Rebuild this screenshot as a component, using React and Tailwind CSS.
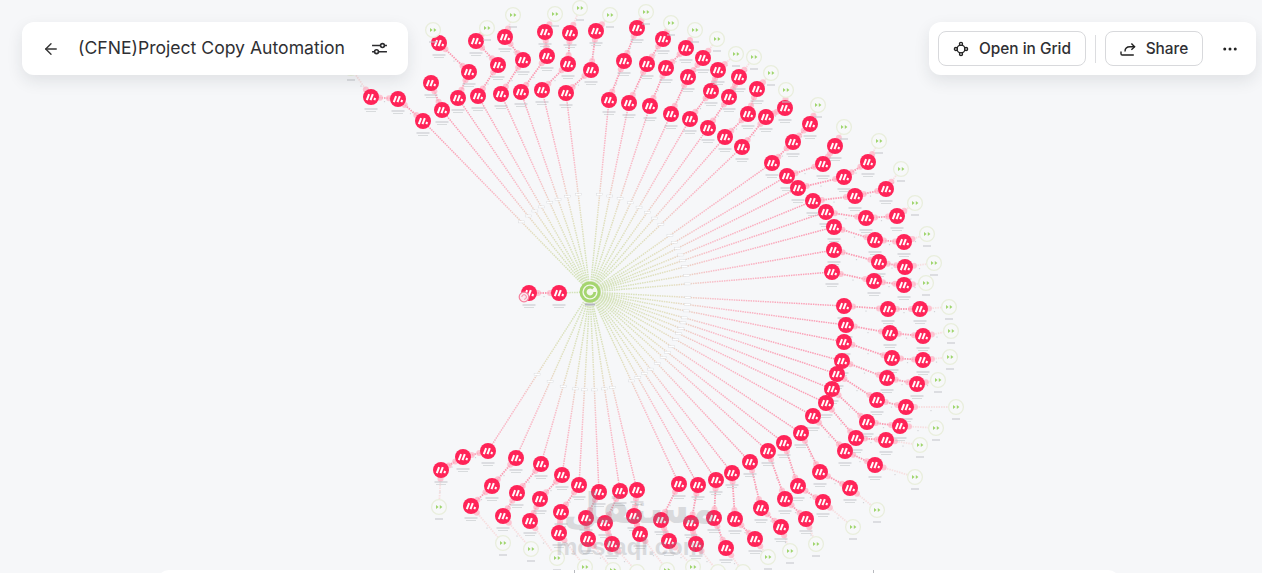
import { ArrowLeft, Ellipsis } from "lucide-react";

const HUB = [590, 292];

// each route runs from the hub outwards: modules first, then the grey ending
const routes = [
  { m: [[423, 121], [398, 99], [371, 97]], end: [351, 68] },
  { m: [[442, 110], [431, 83]] },
  { m: [[458, 98], [469, 72], [439, 43]], end: [433, 30] },
  { m: [[478, 96], [498, 65], [476, 41]], end: [487, 28] },
  { m: [[501, 94], [523, 60], [505, 37]], end: [513, 15] },
  { m: [[521, 92], [547, 56], [545, 32]], end: [555, 14] },
  { m: [[542, 90], [568, 64], [570, 33]], end: [580, 8] },
  { m: [[566, 93], [591, 70], [596, 31]], end: [610, 15] },
  { m: [[609, 100], [624, 61], [637, 28]], end: [646, 12] },
  { m: [[629, 103], [647, 64], [663, 39]], end: [671, 23] },
  { m: [[650, 106], [666, 68], [686, 48]], end: [695, 30] },
  { m: [[671, 114], [688, 77], [703, 58]], end: [717, 39] },
  { m: [[690, 119], [711, 91], [718, 70]], end: [736, 54] },
  { m: [[708, 128], [729, 97], [739, 77]], end: [754, 57] },
  { m: [[725, 137], [748, 114], [757, 89]], end: [771, 73] },
  { m: [[742, 147], [766, 117], [785, 108]], end: [786, 90] },
  { m: [[772, 163], [793, 142], [810, 124]], end: [818, 105] },
  { m: [[787, 176], [823, 164], [835, 146]], end: [844, 127] },
  { m: [[798, 188], [844, 177], [868, 162]], end: [879, 141] },
  { m: [[813, 201], [855, 196], [886, 189]], end: [901, 169] },
  { m: [[826, 212], [866, 218], [897, 216]], end: [915, 203] },
  { m: [[834, 227], [875, 240], [904, 242]], end: [927, 234] },
  { m: [[834, 250], [879, 262], [905, 267]], end: [934, 263] },
  { m: [[832, 272], [874, 281], [904, 285]], end: [926, 283] },
  { m: [[844, 306], [888, 309], [920, 309]], end: [949, 307] },
  { m: [[846, 325], [890, 333], [923, 336]], end: [951, 331] },
  { m: [[844, 342], [892, 358], [923, 360]], end: [950, 357] },
  { m: [[842, 361], [887, 378], [917, 384]], end: [938, 380] },
  { m: [[837, 374], [877, 400], [906, 407]], end: [956, 407] },
  { m: [[832, 389], [867, 422], [900, 426]], end: [936, 428] },
  { m: [[826, 403], [856, 438], [886, 440]], end: [920, 445] },
  { m: [[813, 416], [845, 451], [875, 465]], end: [915, 477] },
  { m: [[801, 433], [820, 472], [850, 488]], end: [877, 510] },
  { m: [[784, 443], [798, 486], [823, 502]], end: [853, 527] },
  { m: [[768, 451], [785, 499], [806, 519]], end: [816, 544] },
  { m: [[750, 462], [761, 508], [781, 527]], end: [790, 551] },
  { m: [[732, 473], [735, 519], [755, 539]], end: [768, 557] },
  { m: [[716, 480], [714, 518], [726, 548]], end: [743, 572] },
  { m: [[698, 485], [691, 523], [696, 544]], end: [718, 572] },
  { m: [[679, 484], [661, 520], [669, 541]], end: [693, 567] },
  { m: [[637, 490], [634, 516], [640, 534]], end: [667, 570] },
  { m: [[620, 491], [605, 523], [612, 544]], end: [637, 572] },
  { m: [[599, 492], [586, 518], [588, 539]], end: [613, 570] },
  { m: [[579, 485], [561, 512], [559, 533]], end: [585, 567] },
  { m: [[562, 475], [540, 499], [530, 521]], end: [557, 558] },
  { m: [[541, 464], [517, 493], [503, 516]], end: [531, 549] },
  { m: [[516, 458], [492, 486], [471, 506]], end: [503, 543] },
  { m: [[488, 451], [463, 457], [441, 470]], end: [439, 507] },
  { m: [[559, 293], [529, 293]] },
];

const towards = (a, b, dist) => {
  const dx = b[0] - a[0];
  const dy = b[1] - a[1];
  const len = Math.hypot(dx, dy) || 1;
  return [a[0] + (dx / len) * dist, a[1] + (dy / len) * dist];
};

const Link = ({ from, to, faint }) => {
  const mid = [(from[0] + to[0]) / 2, (from[1] + to[1]) / 2];
  return (
    <g>
      <line
        x1={from[0]}
        y1={from[1]}
        x2={to[0]}
        y2={to[1]}
        stroke={faint ? "#f7dfe0" : "#fb9bb2"}
        strokeWidth="1.8"
        strokeDasharray="1.5 1"
      />
      <rect x={mid[0] - 0.6} y={mid[1] + 3} width="1.2" height="1.2" fill="#d2d4d8" />
    </g>
  );
};

const Caption = ({ x, y, wide }) => (
  <g fill="#c2c4c9">
    <rect x={x - (wide ? 6.5 : 4)} y={y} width={wide ? 13 : 8} height="1" />
    {wide && <rect x={x - 5} y={y + 2.5} width="10" height="0.8" opacity="0.7" />}
  </g>
);

const Module = ({ at }) => (
  <g transform={`translate(${at[0]} ${at[1]})`}>
    <circle r="8" fill="#ff2458" />
    <g stroke="#fff" strokeWidth="2">
      <line x1="-4.2" y1="3.2" x2="-1.9" y2="-2.9" />
      <line x1="-0.5" y1="3.2" x2="1.8" y2="-2.9" />
      <line x1="3.3" y1="3.2" x2="4.2" y2="1" />
    </g>
  </g>
);

const Ending = ({ at }) => (
  <g transform={`translate(${at[0]} ${at[1]})`}>
    <circle r="7.4" fill="#f7f8f9" stroke="#e9eedd" strokeWidth="1.3" />
    <path d="M-3 -2v4l2.6 -2zM0.8 -2v4l2.6 -2z" fill="#9fd56d" />
  </g>
);

const Flow = () => {
  const modules = routes.flatMap((r) => r.m);
  const handles = routes.flatMap((r) => {
    const path = r.end ? [...r.m, r.end] : r.m;
    return path.slice(0, -1).flatMap((p, i) => [
      towards(p, path[i + 1], 9),
      ...(i + 1 < r.m.length ? [towards(path[i + 1], p, 9)] : []),
    ]);
  });

  return (
    <svg className="absolute inset-0" width="1262" height="573" viewBox="0 0 1262 573">
      <defs>
        <radialGradient id="spoke" gradientUnits="userSpaceOnUse" cx={HUB[0]} cy={HUB[1]} r="230">
          <stop offset="0" stopColor="#cfe3b5" />
          <stop offset="0.36" stopColor="#e3dfc0" />
          <stop offset="0.55" stopColor="#f9bcc8" />
          <stop offset="1" stopColor="#fb9fb6" />
        </radialGradient>
      </defs>

      {routes.map((r, i) => (
        <line
          key={`spoke-${i}`}
          x1={HUB[0]}
          y1={HUB[1]}
          x2={r.m[0][0]}
          y2={r.m[0][1]}
          stroke="url(#spoke)"
          strokeWidth="1.5"
          strokeDasharray="1.5 0.9"
        />
      ))}

      {/* small edge labels on the spokes */}
      {routes.slice(0, -1).map((r, i) => {
        const p = towards(HUB, r.m[0], 98);
        return <rect key={`tag-${i}`} x={p[0] - 3} y={p[1] - 1} width="6" height="2" fill="#fff" stroke="#d4d6da" strokeWidth="0.4" />;
      })}

      {routes.map((r, i) =>
        r.m.slice(0, -1).map((p, j) => <Link key={`l-${i}-${j}`} from={p} to={r.m[j + 1]} />),
      )}
      {routes.map(
        (r, i) => r.end && <Link key={`e-${i}`} from={r.m[r.m.length - 1]} to={r.end} faint />,
      )}

      {handles.map((p, i) => (
        <circle key={`h-${i}`} cx={p[0]} cy={p[1]} r="3" fill="#ffb0c3" opacity="0.7" />
      ))}

      {modules.map((p, i) => (
        <g key={`m-${i}`}>
          <Caption x={p[0]} y={p[1] + 11.5} wide />
          <Module at={p} />
        </g>
      ))}
      {routes.map(
        (r, i) =>
          r.end && (
            <g key={`end-${i}`}>
              <Caption x={r.end[0]} y={r.end[1] + 11.5} />
              <Ending at={r.end} />
            </g>
          ),
      )}

      {/* trigger on the first module */}
      <circle cx="524" cy="297" r="4.8" fill="#fbeaee" stroke="#f5809d" strokeWidth="1.2" />
      <path d="M521.8 297a2.3 2.3 0 1 1 2.3 2.3" fill="none" stroke="#f5809d" strokeWidth="0.9" />

      {/* hub */}
      <g transform={`translate(${HUB[0]} ${HUB[1]})`}>
        <circle r="10.5" fill="#a5d56f" />
        <circle r="7.6" fill="#f4f8ee" />
        <path d="M3.2 -3.6a4.8 4.8 0 1 0 1.6 3.6" fill="none" stroke="#a5d56f" strokeWidth="2.8" />
        <rect x="-5" y="11.5" width="10" height="2" fill="#b4b6bc" />
      </g>
    </svg>
  );
};

const TuneIcon = () => (
  <svg width="17" height="17" viewBox="0 0 16 16" fill="none" stroke="#2c2c2f" strokeWidth="1.5">
    <path d="M1 5.2h8M12.6 5.2H15M1 11h2.4M7 11h8" />
    <circle cx="10.8" cy="5.2" r="1.8" />
    <circle cx="5.2" cy="11" r="1.8" />
  </svg>
);

const GridIcon = () => (
  <svg width="16" height="16" viewBox="0 0 16 16" fill="none" stroke="#222" strokeWidth="1.4">
    <circle cx="8" cy="8" r="3.9" />
    <circle cx="8" cy="2.9" r="1.5" fill="#fff" />
    <circle cx="8" cy="13.1" r="1.5" fill="#fff" />
    <circle cx="2.9" cy="8" r="1.5" fill="#fff" />
    <circle cx="13.1" cy="8" r="1.5" fill="#fff" />
  </svg>
);

const ShareIcon = () => (
  <svg width="16" height="16" viewBox="0 0 16 16" fill="none" stroke="#222" strokeWidth="1.4">
    <path d="M1 10.5v2.2c0 .7.5 1.3 1.2 1.3h11.6" />
    <path d="M5 10.5c0-3 2-4.8 5-4.8h4.6" />
    <path d="M11.4 2.6l3.2 3.1-3.2 3.1" />
  </svg>
);

const App = () => {
  return (
    <div className="relative h-screen overflow-hidden bg-[#f6f7f9] font-['Inter',sans-serif] text-[#2f2f33]">
      <Flow />

      {/* watermark over the canvas */}
      <div className="pointer-events-none absolute left-[555px] top-[484px] flex w-[150px] flex-col items-center text-[#84868b] opacity-25">
        <span className="ml-[20px] font-['DejaVu_Sans',sans-serif] text-[42px] font-bold leading-[49px]">مستقل</span>
        <span className="font-['Liberation_Sans',sans-serif] text-[24px] font-bold leading-[28px]">mostaql.com</span>
      </div>

      <div className="absolute left-[22px] top-[22px] flex h-[53px] w-[386px] items-center rounded-xl bg-white px-[20px] shadow-[0_6px_16px_rgba(30,35,50,0.1)]">
        <ArrowLeft className="h-[18px] w-[18px] text-[#333]" strokeWidth={1.8} />
        <h1 className="ml-[18px] flex-1 text-[17.6px] font-normal whitespace-nowrap">(CFNE)Project Copy Automation</h1>
        <TuneIcon />
      </div>

      <div className="absolute left-[929px] top-[22px] flex h-[53px] w-[327px] items-center rounded-xl bg-white pl-[9px] shadow-[0_6px_16px_rgba(30,35,50,0.1)]">
        <button className="flex h-[35px] w-[148px] items-center justify-center gap-[10px] rounded-lg border border-[#d8d9dc] text-[15.4px] font-medium">
          <GridIcon />
          Open in Grid
        </button>
        <div className="mx-[9px] h-[28px] w-px bg-[#dcdde0]" />
        <button className="flex h-[35px] w-[98px] items-center justify-center gap-[10px] rounded-lg border border-[#d8d9dc] text-[15.4px] font-medium">
          <ShareIcon />
          Share
        </button>
        <Ellipsis className="ml-[18px] h-[18px] w-[18px] text-[#222]" strokeWidth={2} />
      </div>

      {/* panel peeking in at the bottom */}
      <div className="absolute left-[157px] top-[570px] flex h-[12px] w-[963px] rounded-t-xl bg-white">
        <div className="w-[417px]" />
        <div className="w-[300px] border-x border-[#b8babf]" />
      </div>
    </div>
  );
};

export default App;
